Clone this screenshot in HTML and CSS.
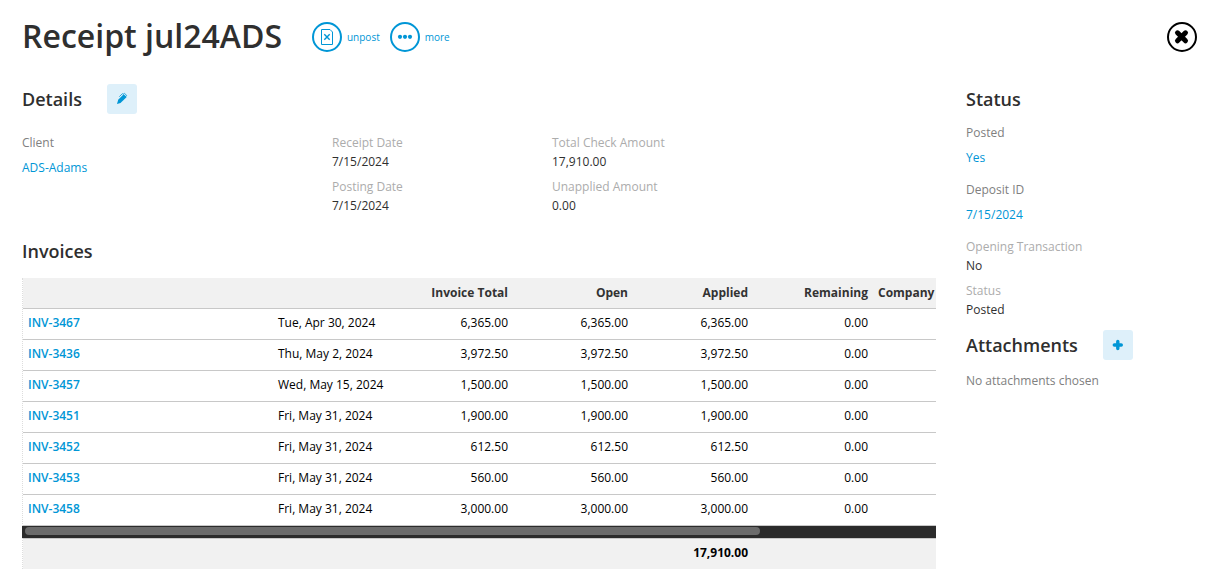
FILE: index.html
```html
<!DOCTYPE html>
<html lang="en">
<head>
<meta charset="utf-8">
<meta name="viewport" content="width=device-width, initial-scale=1">
<title>Receipt jul24ADS</title>
<link rel="stylesheet" href="styles.css">
</head>
<body>
<header class="page-header">
  <h1 class="page-title">Receipt jul24ADS</h1>
  <button class="action" type="button">
    <svg class="action-icon" viewBox="0 0 30 30" fill="none" stroke="currentColor" aria-hidden="true">
      <circle cx="15" cy="15" r="14" stroke-width="2"/>
      <path d="M9.500 7.500h8.500l2.500 2.500v12.500h-11z"/>
      <path d="M12.300 12.300l5.400 5.400M17.700 12.300l-5.400 5.400" stroke-width="1.400"/>
    </svg>
    <span>unpost</span>
  </button>
  <button class="action" type="button">
    <svg class="action-icon" viewBox="0 0 30 30" fill="none" stroke="currentColor" aria-hidden="true">
      <circle cx="15" cy="15" r="14" stroke-width="2"/>
      <g fill="currentColor" stroke="none"><circle cx="10" cy="14.800" r="2.100"/><circle cx="15" cy="14.800" r="2.100"/><circle cx="20" cy="14.800" r="2.100"/></g>
    </svg>
    <span>more</span>
  </button>
  <button class="close" type="button" aria-label="Close">
    <svg class="action-icon" viewBox="0 0 30 30" fill="none" stroke="currentColor" aria-hidden="true">
      <circle cx="15" cy="15" r="14" stroke-width="2"/>
      <path d="M10.500 10.800l8 8M18.500 10.800l-8 8" stroke-width="5" stroke-linecap="round"/>
    </svg>
  </button>
</header>

<div class="layout">
  <main class="main">
    <div class="heading-row">
      <h2 class="heading">Details</h2>
      <button class="square-button" type="button" aria-label="Edit details">
        <svg class="square-icon" viewBox="0 0 30 30" aria-hidden="true">
          <path d="M10 20l1.200-4.200 5.500-5.500 3 2.600-6.200 6.100z" fill="currentColor"/>
          <path d="M12.300 12.700l3-3 1.200.3 1-.6 2.200 2-.8 1" fill="none" stroke="currentColor" stroke-width=".8"/>
        </svg>
      </button>
    </div>
    <div class="details">
      <dl class="fields">
        <div class="field field-linked"><dt>Client</dt><dd><a href="#client">ADS-Adams</a></dd></div>
      </dl>
      <dl class="fields">
        <div class="field"><dt>Receipt Date</dt><dd>7/15/2024</dd></div>
        <div class="field"><dt>Posting Date</dt><dd>7/15/2024</dd></div>
      </dl>
      <dl class="fields">
        <div class="field"><dt>Total Check Amount</dt><dd>17,910.00</dd></div>
        <div class="field"><dt>Unapplied Amount</dt><dd>0.00</dd></div>
      </dl>
    </div>

    <div class="heading-row heading-invoices">
      <h2 class="heading">Invoices</h2>
    </div>
    <div class="grid">
      <table class="table">
        <colgroup><col class="col-invoice"><col class="col-value"><col class="col-value"><col class="col-value"><col class="col-value"><col class="col-value"><col></colgroup>
        <thead>
          <tr><th></th><th></th><th class="num">Invoice Total</th><th class="num">Open</th><th class="num">Applied</th><th class="num">Remaining</th><th>Company</th></tr>
        </thead>
        <tbody>
          <tr><td><a href="#3467">INV-3467</a></td><td>Tue, Apr 30, 2024</td><td class="num">6,365.00</td><td class="num">6,365.00</td><td class="num">6,365.00</td><td class="num">0.00</td><td></td></tr>
          <tr><td><a href="#3436">INV-3436</a></td><td>Thu, May 2, 2024</td><td class="num">3,972.50</td><td class="num">3,972.50</td><td class="num">3,972.50</td><td class="num">0.00</td><td></td></tr>
          <tr><td><a href="#3457">INV-3457</a></td><td>Wed, May 15, 2024</td><td class="num">1,500.00</td><td class="num">1,500.00</td><td class="num">1,500.00</td><td class="num">0.00</td><td></td></tr>
          <tr><td><a href="#3451">INV-3451</a></td><td>Fri, May 31, 2024</td><td class="num">1,900.00</td><td class="num">1,900.00</td><td class="num">1,900.00</td><td class="num">0.00</td><td></td></tr>
          <tr><td><a href="#3452">INV-3452</a></td><td>Fri, May 31, 2024</td><td class="num">612.50</td><td class="num">612.50</td><td class="num">612.50</td><td class="num">0.00</td><td></td></tr>
          <tr><td><a href="#3453">INV-3453</a></td><td>Fri, May 31, 2024</td><td class="num">560.00</td><td class="num">560.00</td><td class="num">560.00</td><td class="num">0.00</td><td></td></tr>
          <tr><td><a href="#3458">INV-3458</a></td><td>Fri, May 31, 2024</td><td class="num">3,000.00</td><td class="num">3,000.00</td><td class="num">3,000.00</td><td class="num">0.00</td><td></td></tr>
        </tbody>
      </table>
      <div class="scrollbar"><div class="scrollbar-thumb"></div></div>
      <table class="table table-totals">
        <colgroup><col class="col-invoice"><col class="col-value"><col class="col-value"><col class="col-value"><col class="col-value"><col class="col-value"><col></colgroup>
        <tbody>
          <tr><td></td><td></td><td></td><td></td><td class="num">17,910.00</td><td></td><td></td></tr>
        </tbody>
      </table>
    </div>
  </main>

  <aside class="sidebar">
    <div class="heading-row">
      <h2 class="heading">Status</h2>
    </div>
    <dl class="fields">
      <div class="field field-linked"><dt>Posted</dt><dd><a href="#posted">Yes</a></dd></div>
      <div class="field field-linked"><dt>Deposit ID</dt><dd><a href="#deposit">7/15/2024</a></dd></div>
      <div class="field"><dt>Opening Transaction</dt><dd>No</dd></div>
      <div class="field"><dt>Status</dt><dd>Posted</dd></div>
    </dl>
    <div class="heading-row">
      <h2 class="heading">Attachments</h2>
      <button class="square-button" type="button" aria-label="Add attachment">
        <svg class="square-icon" viewBox="0 0 30 30" aria-hidden="true">
          <path d="M14.800 11.500v7M11.300 15h7" fill="none" stroke="currentColor" stroke-width="3.400" stroke-linecap="round"/>
        </svg>
      </button>
    </div>
    <p class="empty-note">No attachments chosen</p>
  </aside>
</div>
</body>
</html>
```

FILE: styles.css
```css
* {
  box-sizing: border-box;
}

body {
  margin: 0;
  padding: 0 24px 12px 22px;
  background: #fff;
  color: #2f2f2f;
  font-family: "Open Sans", "Noto Sans", sans-serif;
  font-size: 12px;
  line-height: 19px;
}

h1, h2, p, dl, dd {
  margin: 0;
}

a {
  color: #0096d6;
  text-decoration: none;
}

button {
  padding: 0;
  border: 0;
  background: none;
  color: #0096d6;
  font: inherit;
  cursor: pointer;
}

.page-header {
  display: flex;
  align-items: center;
  height: 74px;
}

.page-title {
  margin-right: 30px;
  padding-bottom: 2px;
  font-size: 32px;
  font-weight: 600;
  line-height: 44px;
}

.action {
  display: flex;
  align-items: center;
  gap: 5px;
  margin-right: 10px;
  font-size: 10px;
}

.action-icon {
  display: block;
  width: 30px;
  height: 30px;
}

.close {
  margin-left: auto;
  color: #000;
}

.layout {
  display: grid;
  grid-template-columns: minmax(0, 1fr) 231px;
  gap: 30px;
  padding-top: 10px;
}

.heading-row {
  display: flex;
  align-items: center;
  gap: 25px;
  height: 30px;
}

.heading {
  font-size: 18px;
  font-weight: 600;
  line-height: 30px;
}

.square-button {
  border-radius: 3px;
  background: #def0fa;
}

.square-icon {
  display: block;
  width: 30px;
  height: 30px;
}

.details {
  display: grid;
  grid-template-columns: 310px 220px 1fr;
  padding: 19px 0 21px;
}

.fields {
  display: flex;
  flex-direction: column;
  gap: 6px;
}

.field dt {
  color: #acacac;
}

.field-linked dt {
  padding-bottom: 6px;
  color: #808080;
}

.field-linked {
  padding-bottom: 7px;
}

.heading-invoices {
  margin-bottom: 12px;
}

.grid {
  overflow: hidden;
}

.table {
  width: 100%;
  table-layout: fixed;
  border-collapse: separate;
  border-spacing: 0;
  border-left: 1px dotted #ddd;
  color: #000;
}

.col-invoice {
  width: 250px;
}

.col-value {
  width: 120px;
}

.table th,
.table td {
  height: 31px;
  padding: 0 5px 3px;
  border-bottom: 1px solid #c8c8c8;
  text-align: left;
  white-space: nowrap;
}

.table th {
  padding-bottom: 1px;
  background: #f1f1f1;
  color: #333;
  font-weight: 700;
}

.table a {
  font-weight: 600;
}

.table .num {
  text-align: right;
}

.scrollbar {
  height: 12px;
  padding: 1px 3px;
  background: #2b2b2b;
}

.scrollbar-thumb {
  width: 81%;
  height: 8px;
  border-radius: 4px;
  background: #6b6b6b;
}

.table-totals td {
  border-top: 1px solid #c8c8c8;
  border-bottom: 0;
  background: #f1f1f1;
  font-weight: 700;
}

.sidebar .fields {
  padding: 9px 0 11px;
}

.empty-note {
  padding-top: 11px;
  color: #808080;
}
```
